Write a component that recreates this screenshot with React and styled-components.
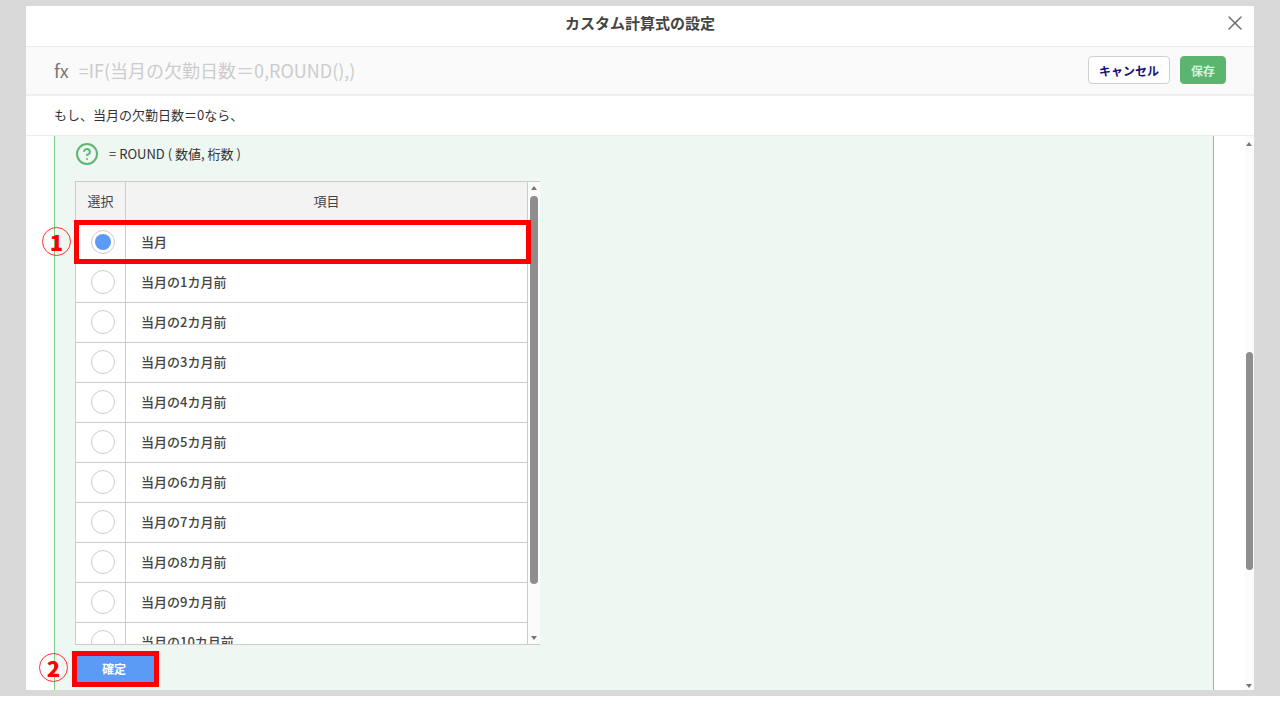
import styled, { createGlobalStyle } from 'styled-components'
import { CircleHelp, X } from 'lucide-react'

const GlobalStyle = createGlobalStyle`
  html, body {
    margin: 0;
    padding: 0;
    height: 711px;
    overflow: hidden;
    background: #ffffff;
    font-family: "Noto Sans CJK JP", "Noto Sans", sans-serif;
  }
`

const Backdrop = styled.div`
  box-sizing: border-box;
  height: 696px;
  padding: 6px 26px;
  background: #d9d9d9;
`

const Modal = styled.div`
  height: 684px;
  background: #ffffff;
  display: flex;
  flex-direction: column;
  overflow: hidden;
`

const Header = styled.div`
  flex: none;
  box-sizing: border-box;
  height: 41px;
  padding-bottom: 7px;
  border-bottom: 1px solid #ececec;
  display: flex;
  align-items: center;
  justify-content: center;
  position: relative;
`

const Title = styled.div`
  font-size: 15px;
  font-weight: 700;
  color: #444444;
`

const CloseButton = styled.div`
  position: absolute;
  right: 7px;
  top: 5px;
  display: flex;
  color: #6f6f6f;
`

const FormulaBar = styled.div`
  flex: none;
  box-sizing: border-box;
  height: 49px;
  padding: 0 28px 1px;
  background: #fafafa;
  border-bottom: 2px solid #efefef;
  display: flex;
  align-items: center;
  gap: 10px;
`

const Fx = styled.span`
  font-size: 18px;
  line-height: 26px;
  margin-bottom: 1px;
  color: #777777;
`

const Formula = styled.span`
  flex: 1;
  font-size: 18px;
  line-height: 26px;
  margin-bottom: 1px;
  color: #cccccc;
`

const Button = styled.div`
  box-sizing: border-box;
  height: 28px;
  border-radius: 4px;
  font-size: 12px;
  font-weight: 700;
  display: flex;
  align-items: center;
  justify-content: center;
  width: ${props => props.$width}px;
  color: ${props => (props.$primary ? '#d9f0de' : '#14147a')};
  background: ${props => (props.$primary ? '#5cb56f' : '#ffffff')};
  border: 1px solid ${props => (props.$primary ? '#5cb56f' : '#d0d0d0')};
`

const Description = styled.div`
  flex: none;
  box-sizing: border-box;
  height: 40px;
  padding: 0 28px 2px;
  border-bottom: 1px solid #ececec;
  display: flex;
  align-items: center;
  font-size: 13px;
  color: #333333;
`

const Body = styled.div`
  flex: 1;
  min-height: 0;
  display: flex;
`

const Content = styled.div`
  flex: 1;
  min-width: 0;
  padding: 0 31px 0 28px;
`

const Panel = styled.div`
  box-sizing: border-box;
  height: 100%;
  background: #eef7f1;
  border-left: 1px solid #7fcb8a;
  border-right: 1px solid #7fcb8a;
  padding: 0 20px;
`

const HelpRow = styled.div`
  height: 45px;
  padding: 0 0 10px 0;
  box-sizing: border-box;
  display: flex;
  align-items: center;
  gap: 10px;
  font-size: 13px;
  color: #333333;
  svg {
    color: #5cb870;
  }
`

const TableArea = styled.div`
  position: relative;
  width: 465px;
  height: 464px;
  display: flex;
`

const Table = styled.div`
  flex: 1;
  min-width: 0;
  overflow: hidden;
  background: #ffffff;
  border: 1px solid #cccccc;
  border-right: none;
`

const Row = styled.div`
  box-sizing: border-box;
  flex: none;
  height: ${props => (props.$head ? 41 : 40)}px;
  display: grid;
  grid-template-columns: 49px 1fr;
  border-bottom: 1px solid #cccccc;
  background: ${props => (props.$head ? '#f3f3f3' : '#ffffff')};
`

const Cell = styled.div`
  display: flex;
  align-items: center;
  font-size: 13px;
  font-weight: ${props => (props.$head ? 400 : 500)};
  color: #444444;
  justify-content: ${props => (props.$head ? 'center' : 'flex-start')};
  padding-left: ${props => (props.$text && !props.$head ? '15px' : '0')};
  padding-bottom: ${props => (props.$head ? 4 : 2)}px;
  border-left: ${props => (props.$text ? '1px solid #cccccc' : 'none')};
`

const RadioCell = styled(Cell)`
  justify-content: center;
  padding-left: 5px;
`

const Radio = styled.div`
  box-sizing: border-box;
  width: 24px;
  height: 24px;
  border-radius: 50%;
  border: 1px solid #cccccc;
  background: #ffffff;
  display: flex;
  align-items: center;
  justify-content: center;
  &::after {
    content: '';
    display: ${props => (props.$on ? 'block' : 'none')};
    width: 16px;
    height: 16px;
    border-radius: 50%;
    background: #5b9af5;
  }
`

const TableTrack = styled.div`
  position: relative;
  flex: none;
  width: 13px;
  background: #fbfbfb;
  border-left: 1px solid #cccccc;
  border-bottom: 1px solid #cccccc;
  border-top: 1px solid #cccccc;
  box-sizing: border-box;
`

const PageTrack = styled.div`
  position: relative;
  flex: none;
  width: 9px;
  background: #fbfbfb;
`

const Thumb = styled.div`
  position: absolute;
  left: ${props => props.$left}px;
  right: ${props => props.$left}px;
  top: ${props => props.$top}px;
  height: ${props => props.$height}px;
  border-radius: 4px;
  background: #8e8e8e;
`

const Arrow = styled.div`
  position: absolute;
  left: 50%;
  margin-left: -3.5px;
  width: 0;
  height: 0;
  border-left: 3.5px solid transparent;
  border-right: 3.5px solid transparent;
  ${props => (props.$down
    ? `bottom: ${props.$gap}px; border-top: 4px solid #777777;`
    : `top: ${props.$gap}px; border-bottom: 4px solid #777777;`)}
`

const ConfirmWrap = styled.div`
  position: relative;
  width: 77px;
  margin-top: 11px;
  margin-left: 2px;
`

const ConfirmButton = styled.div`
  box-sizing: border-box;
  height: 26px;
  padding: 0 3px 2px 0;
  background: #5b9af5;
  color: #ffffff;
  font-size: 12px;
  font-weight: 700;
  display: flex;
  align-items: center;
  justify-content: center;
`

const RedBox = styled.div`
  position: absolute;
  box-sizing: border-box;
  border: 5px solid #ff0000;
  pointer-events: none;
  left: ${props => props.$left}px;
  top: ${props => props.$top}px;
  width: ${props => props.$width}px;
  height: ${props => props.$height}px;
`

const Badge = styled.div`
  position: absolute;
  box-sizing: border-box;
  left: ${props => props.$left}px;
  top: ${props => props.$top}px;
  width: 29px;
  height: 29px;
  border: 1px solid #ff3030;
  border-radius: 50%;
  background: transparent;
  color: #ff0000;
  font-family: "Noto Sans CJK JP", sans-serif;
  font-size: 22px;
  font-weight: 900;
  line-height: 27px;
  text-align: center;
`

const MONTHS = ['当月', '当月の1カ月前', '当月の2カ月前', '当月の3カ月前', '当月の4カ月前', '当月の5カ月前', '当月の6カ月前', '当月の7カ月前', '当月の8カ月前', '当月の9カ月前', '当月の10カ月前']

export default function App() {
  return (
    <>
      <GlobalStyle />
      <Backdrop>
        <Modal>
          <Header>
            <Title>カスタム計算式の設定</Title>
            <CloseButton>
              <X size={24} strokeWidth={1.5} />
            </CloseButton>
          </Header>
          <FormulaBar>
            <Fx>fx</Fx>
            <Formula>=IF(当月の欠勤日数＝0,ROUND(),)</Formula>
            <Button $width={82}>キャンセル</Button>
            <Button $width={46} $primary>保存</Button>
          </FormulaBar>
          <Description>もし、当月の欠勤日数＝0なら、</Description>
          <Body>
            <Content>
              <Panel>
                <HelpRow>
                  <CircleHelp size={24} strokeWidth={2} />
                  = ROUND ( 数値, 桁数 )
                </HelpRow>
                <TableArea>
                  <Table>
                    <Row $head>
                      <Cell $head>選択</Cell>
                      <Cell $head $text>項目</Cell>
                    </Row>
                    {MONTHS.map((month, i) => (
                      <Row key={month}>
                        <RadioCell><Radio $on={i === 0} /></RadioCell>
                        <Cell $text>{month}</Cell>
                      </Row>
                    ))}
                  </Table>
                  <TableTrack>
                    <Arrow $gap={4} />
                    <Thumb $left={2} $top={14} $height={388} />
                    <Arrow $down $gap={4} />
                  </TableTrack>
                  <RedBox $left={-1} $top={39} $width={457} $height={44} />
                  <Badge $left={-33} $top={46}>1</Badge>
                </TableArea>
                <ConfirmWrap>
                  <ConfirmButton>確定</ConfirmButton>
                  <RedBox $left={-5} $top={-5} $width={87} $height={36} />
                  <Badge $left={-38} $top={-3}>2</Badge>
                </ConfirmWrap>
              </Panel>
            </Content>
            <PageTrack>
              <Arrow $gap={6} />
              <Thumb $left={1} $top={216} $height={218} />
              <Arrow $down $gap={2} />
            </PageTrack>
          </Body>
        </Modal>
      </Backdrop>
    </>
  )
}
